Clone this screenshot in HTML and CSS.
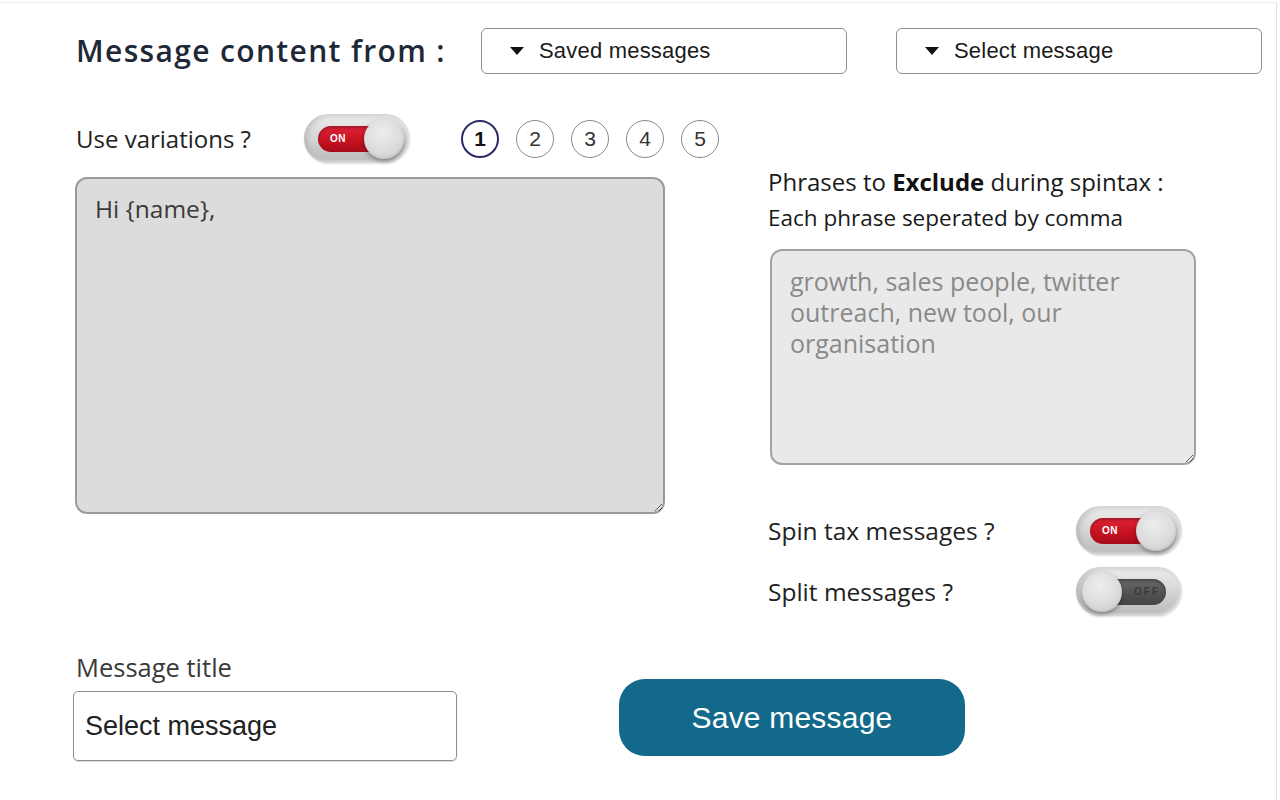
FILE: index.html
```html
<!DOCTYPE html>
<html lang="en">
<head>
<meta charset="utf-8">
<title>Message content</title>
<link rel="stylesheet" href="styles.css">
</head>
<body>
<div class="page">
  <div class="header">
    <h1 class="heading">Message content from :</h1>
    <div class="dropdown"><svg class="caret" width="14" height="8" viewBox="0 0 14 8"><path d="M0 0H14L7 8Z" fill="#111"/></svg>Saved messages</div>
    <div class="dropdown dropdown-second"><svg class="caret" width="14" height="8" viewBox="0 0 14 8"><path d="M0 0H14L7 8Z" fill="#111"/></svg>Select message</div>
  </div>

  <div class="main">
    <div class="left-col">
      <div class="variations-row">
        <span class="label variations-label">Use variations ?</span>
        <div class="toggle on"><div class="track"><span class="track-text">ON</span></div><div class="knob"></div></div>
        <div class="steps">
          <span class="step active">1</span>
          <span class="step">2</span>
          <span class="step">3</span>
          <span class="step">4</span>
          <span class="step">5</span>
        </div>
      </div>
      <textarea class="message-box">Hi {name},</textarea>
    </div>

    <div class="right-col">
      <div class="label phrases-title">Phrases to <b>Exclude</b> during spintax :</div>
      <div class="phrases-sub">Each phrase seperated by comma</div>
      <textarea class="phrases-box" placeholder="growth, sales people, twitter outreach, new tool, our organisation"></textarea>
      <div class="option-row spin-row">
        <span class="label">Spin tax messages ?</span>
        <div class="toggle on"><div class="track"><span class="track-text">ON</span></div><div class="knob"></div></div>
      </div>
      <div class="option-row">
        <span class="label">Split messages ?</span>
        <div class="toggle off"><div class="track"><span class="track-text">OFF</span></div><div class="knob"></div></div>
      </div>
    </div>
  </div>

  <div class="bottom">
    <div class="title-field">
      <div class="label title-label">Message title</div>
      <div class="title-input">Select message</div>
    </div>
    <button class="save-btn">Save message</button>
  </div>
</div>
</body>
</html>
```

FILE: styles.css
```css
html, body {
  margin: 0;
  padding: 0;
  background: #ffffff;
}

body {
  font-family: "Open Sans", "Noto Sans", sans-serif;
  color: #222;
}

.page {
  box-sizing: border-box;
  width: 1277px;
  height: 798px;
  margin-top: 2px;
  border-top: 1px solid #ececec;
  border-right: 1px solid #e2e2e2;
  padding: 25px 0 0 75px;
}

/* header */
.header {
  display: flex;
  align-items: center;
}

.heading {
  flex: 0 0 406px;
  margin: 0;
  font-size: 30px;
  line-height: 40px;
  font-weight: 600;
  color: #1f2836;
  letter-spacing: 1.35px;
  padding-left: 1px;
  box-sizing: border-box;
  white-space: nowrap;
}

.dropdown {
  box-sizing: border-box;
  width: 366px;
  height: 46px;
  border: 1px solid #8f8f8f;
  border-radius: 6px;
  display: flex;
  align-items: center;
  padding-left: 28px;
  font-family: "Liberation Sans", Arial, sans-serif;
  font-size: 22px;
  letter-spacing: 0.2px;
  color: #1b1b1b;
}

.dropdown-second {
  margin-left: 49px;
}

.caret {
  margin-right: 15px;
  flex: 0 0 auto;
}

/* main */
.main {
  display: flex;
  margin-top: 40px;
}

.left-col {
  width: 590px;
  display: flex;
  flex-direction: column;
}

.label {
  font-size: 23px;
  line-height: 30px;
  color: #222;
  white-space: nowrap;
}

.variations-row {
  display: flex;
  align-items: center;
  height: 49px;
}

.variations-label {
  flex: 0 0 229px;
  padding-left: 1px;
  box-sizing: border-box;
  font-size: 24px;
}

.steps {
  display: flex;
  gap: 17px;
  margin-left: 51px;
}

.step {
  box-sizing: border-box;
  width: 38px;
  height: 38px;
  border-radius: 50%;
  border: 1px solid #8a8a8a;
  display: flex;
  align-items: center;
  justify-content: center;
  font-family: "Liberation Sans", Arial, sans-serif;
  font-size: 21px;
  color: #333;
}

.step.active {
  border: 2px solid #2b2b66;
  color: #111;
  font-weight: 700;
}

.message-box {
  box-sizing: border-box;
  margin: 14px 0 0 0;
  width: 590px;
  height: 337px;
  border: 2px solid #9a9a9a;
  border-radius: 12px;
  background: #dcdcdc;
  padding: 13px 18px;
  font-family: "Open Sans", "Noto Sans", sans-serif;
  font-size: 24.5px;
  line-height: 34px;
  color: #3a3a3a;
  resize: both;
  outline: none;
}

/* right column */
.right-col {
  width: 428px;
  margin-left: 103px;
  padding-top: 54px;
  display: flex;
  flex-direction: column;
}

.phrases-title {
  font-size: 24px;
  line-height: 28px;
  color: #1a1a1a;
}

.phrases-title b {
  font-weight: 700;
  color: #111;
}

.phrases-sub {
  margin-top: 8px;
  font-size: 22.5px;
  line-height: 28px;
  color: #1a1a1a;
  white-space: nowrap;
}

.phrases-box {
  box-sizing: border-box;
  margin: 17px 0 0 2px;
  width: 426px;
  height: 216px;
  border: 2px solid #a3a3a3;
  border-radius: 12px;
  background: #e9e9e9;
  padding: 15px 18px;
  font-family: "Open Sans", "Noto Sans", sans-serif;
  font-size: 25px;
  line-height: 31px;
  color: #333;
  resize: both;
  outline: none;
}

.phrases-box::placeholder {
  color: #8a8a8a;
}

.option-row {
  display: flex;
  align-items: center;
  justify-content: space-between;
  width: 414px;
  margin-top: 12px;
}

.spin-row {
  margin-top: 41px;
}

.option-row .label {
  font-size: 24.5px;
}

/* toggle */
.toggle {
  position: relative;
  box-sizing: border-box;
  width: 106px;
  height: 49px;
  border-radius: 25px;
  background: linear-gradient(180deg, #eeeeee 0%, #d2d2d2 55%, #b8b8b8 100%);
  box-shadow: inset 3px 2px 5px rgba(0, 0, 0, 0.14), inset -1px -2px 3px rgba(255, 255, 255, 0.6), 0 1px 2px rgba(0, 0, 0, 0.12);
  display: flex;
  align-items: center;
  padding-left: 14px;
  flex: 0 0 auto;
}

.track {
  box-sizing: border-box;
  width: 76px;
  height: 26px;
  border-radius: 13px;
  display: flex;
  align-items: center;
  font-family: "Liberation Sans", Arial, sans-serif;
  font-weight: 700;
  font-size: 10px;
  letter-spacing: 0.5px;
}

.toggle.on .track {
  background: linear-gradient(180deg, #e22438 0%, #c3111f 60%, #a80c1a 100%);
  box-shadow: inset 0 2px 3px rgba(0, 0, 0, 0.3);
  padding-left: 12px;
  color: #fff;
}

.toggle.off .track {
  background: linear-gradient(180deg, #6a6a6a 0%, #505050 60%, #444 100%);
  box-shadow: inset 0 2px 3px rgba(0, 0, 0, 0.35);
  padding-left: 44px;
  color: #3a3a3a;
  letter-spacing: 2px;
}

.knob {
  position: absolute;
  top: 5px;
  width: 40px;
  height: 40px;
  border-radius: 50%;
  background: radial-gradient(circle at 45% 35%, #ededed 0%, #dcdcdc 55%, #c4c4c4 100%);
  box-shadow: 0 2px 4px rgba(0, 0, 0, 0.35), inset 0 -1px 2px rgba(0, 0, 0, 0.1);
}

.toggle.on .knob {
  right: 6px;
}

.toggle.off .knob {
  left: 6px;
}

/* bottom */
.bottom {
  display: flex;
  align-items: flex-end;
  margin-top: 36px;
}

.title-field {
  display: flex;
  flex-direction: column;
}

.title-label {
  font-size: 25.5px;
  line-height: 30px;
  color: #3a3a3a;
  padding-left: 1px;
}

.title-input {
  box-sizing: border-box;
  margin: 9px 0 0 -2px;
  width: 384px;
  height: 70px;
  border: 1px solid #8e8e8e;
  border-radius: 5px;
  box-shadow: 0 1px 1px rgba(0, 0, 0, 0.15);
  display: flex;
  align-items: center;
  padding-left: 11px;
  font-family: "Liberation Sans", Arial, sans-serif;
  font-size: 27px;
  color: #222;
}

.save-btn {
  margin: 0 0 5px 162px;
  width: 346px;
  height: 77px;
  border: none;
  border-radius: 26px;
  background: #12698a;
  color: #ffffff;
  font-family: "Liberation Sans", Arial, sans-serif;
  font-size: 30px;
  letter-spacing: 0.2px;
  cursor: pointer;
}
```
